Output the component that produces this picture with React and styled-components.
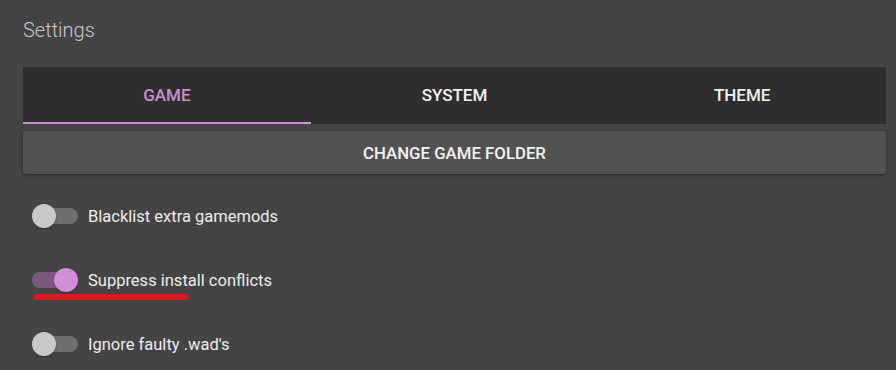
import React, { useState } from "react";
import styled, { createGlobalStyle } from "styled-components";

const Global = createGlobalStyle`
  html, body { margin: 0; padding: 0; background: #444444; }
  body { font-family: Roboto, "Liberation Sans", sans-serif; }
`;

const Page = styled.div`
  min-height: 370px;
  box-sizing: border-box;
  background: #444444;
  padding: 18px 10px 0 23px;
  display: flex;
  flex-direction: column;
`;

const Title = styled.h1`
  margin: 0;
  font-size: 20px;
  line-height: 24px;
  font-weight: 300;
  color: #c9c9c9;
`;

const TabBar = styled.div`
  margin-top: 25px;
  display: grid;
  grid-template-columns: repeat(3, 1fr);
  background: #2e2e2e;
`;

const Tab = styled.div`
  height: 55px;
  border-bottom: 2px solid ${(p) => (p.$active ? "#cf8fd9" : "transparent")};
  display: flex;
  align-items: center;
  justify-content: center;
  font-size: 17px;
  font-weight: 500;
  color: ${(p) => (p.$active ? "#c98fd3" : "#f2f2f2")};
`;

const Button = styled.button`
  margin-top: 7px;
  height: 43px;
  border: none;
  border-radius: 3px;
  background: #525252;
  box-shadow: 0 1px 3px rgba(0, 0, 0, 0.45);
  color: #f2f2f2;
  font-family: Roboto, "Liberation Sans", sans-serif;
  font-size: 16.8px;
  font-weight: 500;
  cursor: pointer;
`;

const List = styled.div`
  margin-top: 10px;
  display: flex;
  flex-direction: column;
`;

const Row = styled.div`
  position: relative;
  height: 64px;
  display: flex;
  align-items: center;
  padding-left: 9px;
  gap: 10px;
`;

const Switch = styled.div`
  position: relative;
  width: 46px;
  height: 24px;
  display: flex;
  align-items: center;
  flex: none;
`;

const Track = styled.div`
  width: 46px;
  height: 16px;
  border-radius: 8px;
  background: ${(p) => (p.$on ? "#7c5a80" : "#6e6e6e")};
`;

const Thumb = styled.div`
  position: absolute;
  top: 0;
  left: ${(p) => (p.$on ? "22px" : "0")};
  width: 24px;
  height: 24px;
  border-radius: 50%;
  background: ${(p) => (p.$on ? "#d08fd8" : "#c9c9c9")};
  box-shadow: 0 1px 2px rgba(0, 0, 0, 0.3);
`;

const Label = styled.span`
  font-size: 16.5px;
  color: #ececec;
`;

const Mark = styled.div`
  position: absolute;
  left: 10px;
  top: 46px;
  width: 155px;
  height: 6px;
  border-radius: 3px;
  background: #e0181c;
`;

const options = [
  { label: "Blacklist extra gamemods", on: false },
  { label: "Suppress install conflicts", on: true, marked: true },
  { label: "Ignore faulty .wad's", on: false },
];

export default function App() {
  const [tab, setTab] = useState(0);
  return (
    <>
      <Global />
      <Page>
        <Title>Settings</Title>
        <TabBar>
          {["GAME", "SYSTEM", "THEME"].map((t, i) => (
            <Tab key={t} $active={tab === i} onClick={() => setTab(i)}>
              {t}
            </Tab>
          ))}
        </TabBar>
        <Button>CHANGE GAME FOLDER</Button>
        <List>
          {options.map((o) => (
            <Row key={o.label}>
              <Switch>
                <Track $on={o.on} />
                <Thumb $on={o.on} />
              </Switch>
              <Label>{o.label}</Label>
              {o.marked && <Mark />}
            </Row>
          ))}
        </List>
      </Page>
    </>
  );
}
